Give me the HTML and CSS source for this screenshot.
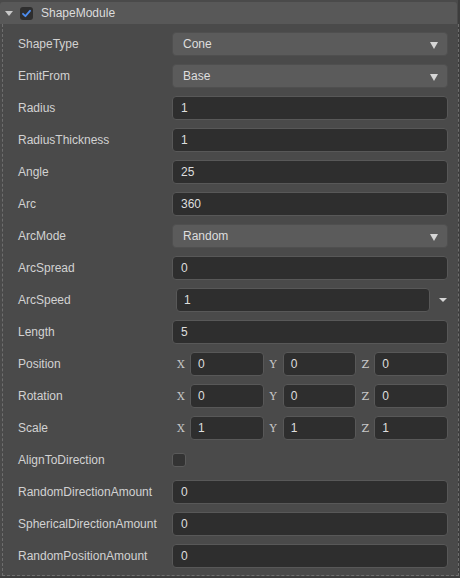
FILE: index.html
```html
<!DOCTYPE html>
<html>
<head>
<meta charset="utf-8">
<link rel="stylesheet" href="styles.css">
</head>
<body>
<div class="panel">
  <div class="header">
    <span class="caret"></span>
    <span class="hcb"><svg width="13" height="13" viewBox="0 0 13 13"><path d="M3 6.8 L5.4 9.2 L10 3.8" fill="none" stroke="#4d8df0" stroke-width="1.8" stroke-linecap="round" stroke-linejoin="round"/></svg></span>
    <span class="title">ShapeModule</span>
  </div>
  <div class="body">
    <div class="row"><div class="label">ShapeType</div><div class="select">Cone<span class="arrow"></span></div></div>
    <div class="row"><div class="label">EmitFrom</div><div class="select">Base<span class="arrow"></span></div></div>
    <div class="row"><div class="label">Radius</div><div class="input">1</div></div>
    <div class="row"><div class="label">RadiusThickness</div><div class="input">1</div></div>
    <div class="row"><div class="label">Angle</div><div class="input">25</div></div>
    <div class="row"><div class="label">Arc</div><div class="input">360</div></div>
    <div class="row"><div class="label">ArcMode</div><div class="select">Random<span class="arrow"></span></div></div>
    <div class="row"><div class="label">ArcSpread</div><div class="input">0</div></div>
    <div class="row"><div class="label">ArcSpeed</div><div class="curve"><div class="input">1</div><span class="arrow small"></span></div></div>
    <div class="row"><div class="label">Length</div><div class="input">5</div></div>
    <div class="row"><div class="label">Position</div><div class="vec"><span class="axis">X</span><div class="input">0</div><span class="axis">Y</span><div class="input">0</div><span class="axis">Z</span><div class="input">0</div></div></div>
    <div class="row"><div class="label">Rotation</div><div class="vec"><span class="axis">X</span><div class="input">0</div><span class="axis">Y</span><div class="input">0</div><span class="axis">Z</span><div class="input">0</div></div></div>
    <div class="row"><div class="label">Scale</div><div class="vec"><span class="axis">X</span><div class="input">1</div><span class="axis">Y</span><div class="input">1</div><span class="axis">Z</span><div class="input">1</div></div></div>
    <div class="row"><div class="label">AlignToDirection</div><div><span class="cb"></span></div></div>
    <div class="row"><div class="label">RandomDirectionAmount</div><div class="input">0</div></div>
    <div class="row"><div class="label">SphericalDirectionAmount</div><div class="input">0</div></div>
    <div class="row"><div class="label">RandomPositionAmount</div><div class="input">0</div></div>
  </div>
</div>
</body>
</html>
```
FILE: styles.css
```css
html, body {
  margin: 0;
  padding: 0;
  background: #3d3d3d;
}
body {
  font-family: "Liberation Sans", Arial, sans-serif;
  font-size: 12px;
  color: #d6d6d6;
}
.panel {
  width: 458px;
  background: #4a4a4a;
  padding-top: 2px;
}
.header {
  height: 22px;
  background: #585858;
  border-radius: 3px 3px 0 0;
  display: flex;
  align-items: center;
  margin-right: 1px;
}
.caret {
  width: 0;
  height: 0;
  border-left: 4px solid transparent;
  border-right: 4px solid transparent;
  border-top: 5px solid #c8c8c8;
  margin-left: 5px;
  margin-top: 1px;
}
.hcb {
  width: 13px;
  height: 13px;
  background: #2e2e2e;
  border-radius: 3px;
  margin-left: 7px;
  display: flex;
}
.title {
  margin-left: 8px;
  color: #dcdcdc;
}
.body {
  margin-left: 2px;
  border: 1px dashed #6e6e6e;
  border-top: none;
  padding: 4px 10px 3px 15px;
  width: 430px;
}
.row {
  height: 32px;
  display: grid;
  grid-template-columns: 154px 1fr;
  align-items: center;
}
.label {
  color: #d2d2d2;
}
.input, .select {
  height: 22px;
  border: 1px solid #585858;
  border-radius: 4px;
  background: #2e2e2e;
  color: #dedede;
  display: flex;
  align-items: center;
  padding-left: 8px;
  position: relative;
}
.select {
  background: #5b5b5b;
  border-color: #4f4f4f;
  padding-left: 10px;
}
.arrow {
  position: absolute;
  right: 9px;
  top: 9px;
  width: 0;
  height: 0;
  border-left: 4px solid transparent;
  border-right: 4px solid transparent;
  border-top: 7px solid #d6d6d6;
}
.curve {
  display: flex;
  align-items: center;
  padding-left: 4px;
}
.curve .input {
  flex: 1;
  padding-left: 7px;
}
.arrow.small {
  position: static;
  margin: 0 1px 0 9px;
  border-left-width: 4px;
  border-right-width: 4px;
  border-top-width: 4px;
}
.vec {
  display: grid;
  grid-template-columns: 18px 1fr 19px 1fr 18px 1fr;
  align-items: center;
}
.vec .input {
  padding-left: 7px;
}
.axis {
  font-family: "DejaVu Serif", "Liberation Serif", serif;
  font-size: 11px;
  color: #c8c8c8;
  text-align: center;
}
.cb {
  display: block;
  width: 12px;
  height: 12px;
  border: 1px solid #5a5a5a;
  border-radius: 3px;
  background: #333333;
}
```
